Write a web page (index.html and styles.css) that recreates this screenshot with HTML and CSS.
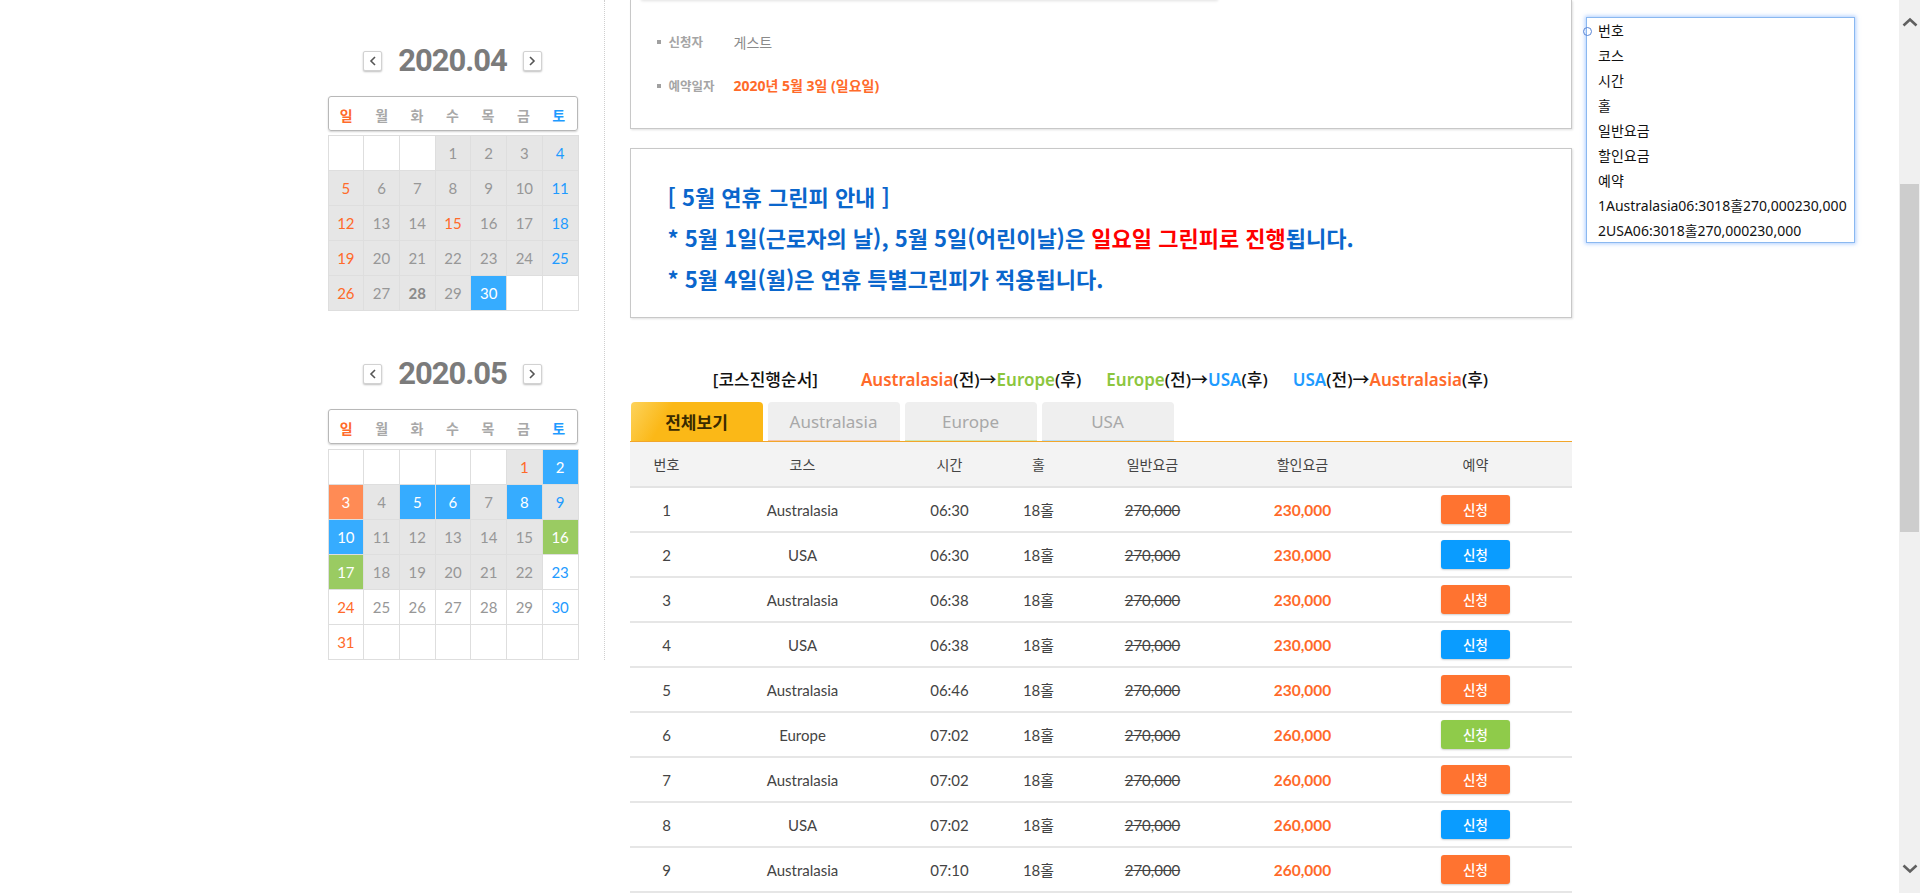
FILE: index.html
```html
<!DOCTYPE html>
<html lang="ko">
<head>
<meta charset="utf-8">
<title>예약</title>
<link rel="stylesheet" href="styles.css">
</head>
<body>
<div class="viewport">
  <div class="wrap">
    <aside class="side">
      <section class="cal">
        <div class="cal-title">
          <span class="arrow"><svg width="8" height="10" viewBox="0 0 8 10"><polyline points="6,1 2,5 6,9" fill="none" stroke="#555" stroke-width="1.6"/></svg></span>
          <h3>2020.04</h3>
          <span class="arrow"><svg width="8" height="10" viewBox="0 0 8 10"><polyline points="2,1 6,5 2,9" fill="none" stroke="#555" stroke-width="1.6"/></svg></span>
        </div>
        <div class="dow"><span class="sun">일</span><span>월</span><span>화</span><span>수</span><span>목</span><span>금</span><span class="sat">토</span></div>
        <table class="grid">
          <tr><td class="w"></td><td class="w"></td><td class="w"></td><td class="g">1</td><td class="g">2</td><td class="g">3</td><td class="g sat">4</td></tr>
          <tr><td class="g sun">5</td><td class="g">6</td><td class="g">7</td><td class="g">8</td><td class="g">9</td><td class="g">10</td><td class="g sat">11</td></tr>
          <tr><td class="g sun">12</td><td class="g">13</td><td class="g">14</td><td class="g sun">15</td><td class="g">16</td><td class="g">17</td><td class="g sat">18</td></tr>
          <tr><td class="g sun">19</td><td class="g">20</td><td class="g">21</td><td class="g">22</td><td class="g">23</td><td class="g">24</td><td class="g sat">25</td></tr>
          <tr><td class="g sun">26</td><td class="g">27</td><td class="g today">28</td><td class="g">29</td><td class="bb">30</td><td class="w"></td><td class="w"></td></tr>
        </table>
      </section>
      <section class="cal cal-next">
        <div class="cal-title">
          <span class="arrow"><svg width="8" height="10" viewBox="0 0 8 10"><polyline points="6,1 2,5 6,9" fill="none" stroke="#555" stroke-width="1.6"/></svg></span>
          <h3>2020.05</h3>
          <span class="arrow"><svg width="8" height="10" viewBox="0 0 8 10"><polyline points="2,1 6,5 2,9" fill="none" stroke="#555" stroke-width="1.6"/></svg></span>
        </div>
        <div class="dow"><span class="sun">일</span><span>월</span><span>화</span><span>수</span><span>목</span><span>금</span><span class="sat">토</span></div>
        <table class="grid grid-may">
          <tr><td class="w"></td><td class="w"></td><td class="w"></td><td class="w"></td><td class="w"></td><td class="g sun">1</td><td class="bb">2</td></tr>
          <tr><td class="ob">3</td><td class="g">4</td><td class="bb">5</td><td class="bb">6</td><td class="g">7</td><td class="bb">8</td><td class="g sat">9</td></tr>
          <tr><td class="bb">10</td><td class="g">11</td><td class="g">12</td><td class="g">13</td><td class="g">14</td><td class="g">15</td><td class="gb">16</td></tr>
          <tr><td class="gb">17</td><td class="g">18</td><td class="g">19</td><td class="g">20</td><td class="g">21</td><td class="g">22</td><td class="w sat">23</td></tr>
          <tr><td class="w sun">24</td><td class="w">25</td><td class="w">26</td><td class="w">27</td><td class="w">28</td><td class="w">29</td><td class="w sat">30</td></tr>
          <tr><td class="w sun">31</td><td class="w"></td><td class="w"></td><td class="w"></td><td class="w"></td><td class="w"></td><td class="w"></td></tr>
        </table>
      </section>
    </aside>

    <main class="main">
      <div class="info">
        <div class="cutcard"></div>
        <div class="info-row"><span class="label">신청자</span><span class="value">게스트</span></div>
        <div class="info-row"><span class="label">예약일자</span><span class="value date">2020년 5월 3일 (일요일)</span></div>
      </div>

      <div class="notice">
        <p>[ 5월 연휴 그린피 안내 ]</p>
        <p>* 5월 1일(근로자의 날), 5월 5일(어린이날)은 <em>일요일 그린피로 진행</em>됩니다.</p>
        <p>* 5월 4일(월)은 연휴 특별그린피가 적용됩니다.</p>
      </div>

      <div class="order">
        <span class="order-title">[코스진행순서]</span>
        <span class="order-item"><b class="c-au">Australasia</b>(전)→<b class="c-eu">Europe</b>(후)</span>
        <span class="order-item"><b class="c-eu">Europe</b>(전)→<b class="c-us">USA</b>(후)</span>
        <span class="order-item"><b class="c-us">USA</b>(전)→<b class="c-au">Australasia</b>(후)</span>
      </div>

      <div class="tabs">
        <span class="tab active">전체보기</span>
        <span class="tab t-au">Australasia</span>
        <span class="tab t-eu">Europe</span>
        <span class="tab t-us">USA</span>
      </div>

      <table class="list">
        <colgroup><col class="c1"><col class="c2"><col class="c3"><col class="c4"><col class="c5"><col class="c6"><col class="c7"></colgroup>
        <thead>
          <tr><th>번호</th><th>코스</th><th>시간</th><th>홀</th><th>일반요금</th><th>할인요금</th><th>예약</th></tr>
        </thead>
        <tbody>
          <tr><td>1</td><td>Australasia</td><td>06:30</td><td>18홀</td><td><s>270,000</s></td><td class="price">230,000</td><td><span class="btn b-au">신청</span></td></tr>
          <tr><td>2</td><td>USA</td><td>06:30</td><td>18홀</td><td><s>270,000</s></td><td class="price">230,000</td><td><span class="btn b-us">신청</span></td></tr>
          <tr><td>3</td><td>Australasia</td><td>06:38</td><td>18홀</td><td><s>270,000</s></td><td class="price">230,000</td><td><span class="btn b-au">신청</span></td></tr>
          <tr><td>4</td><td>USA</td><td>06:38</td><td>18홀</td><td><s>270,000</s></td><td class="price">230,000</td><td><span class="btn b-us">신청</span></td></tr>
          <tr><td>5</td><td>Australasia</td><td>06:46</td><td>18홀</td><td><s>270,000</s></td><td class="price">230,000</td><td><span class="btn b-au">신청</span></td></tr>
          <tr><td>6</td><td>Europe</td><td>07:02</td><td>18홀</td><td><s>270,000</s></td><td class="price">260,000</td><td><span class="btn b-eu">신청</span></td></tr>
          <tr><td>7</td><td>Australasia</td><td>07:02</td><td>18홀</td><td><s>270,000</s></td><td class="price">260,000</td><td><span class="btn b-au">신청</span></td></tr>
          <tr><td>8</td><td>USA</td><td>07:02</td><td>18홀</td><td><s>270,000</s></td><td class="price">260,000</td><td><span class="btn b-us">신청</span></td></tr>
          <tr><td>9</td><td>Australasia</td><td>07:10</td><td>18홀</td><td><s>270,000</s></td><td class="price">260,000</td><td><span class="btn b-au">신청</span></td></tr>
        </tbody>
      </table>
    </main>
  </div>

  <ul class="popup">
    <li>번호</li>
    <li>코스</li>
    <li>시간</li>
    <li>홀</li>
    <li>일반요금</li>
    <li>할인요금</li>
    <li>예약</li>
    <li>1Australasia06:3018홀270,000230,000</li>
    <li>2USA06:3018홀270,000230,000</li>
  </ul>
</div>

<div class="scrollbar">
  <div class="sb-btn"><svg width="16" height="10" viewBox="0 0 16 10"><polyline points="1.5,8.5 8,2.5 14.5,8.5" fill="none" stroke="#606060" stroke-width="2.6"/></svg></div>
  <div class="sb-space-top"></div>
  <div class="sb-thumb"></div>
  <div class="sb-space"></div>
  <div class="sb-btn sb-down"><svg width="16" height="10" viewBox="0 0 16 10"><polyline points="1.5,1.5 8,7.5 14.5,1.5" fill="none" stroke="#606060" stroke-width="2.6"/></svg></div>
</div>
</body>
</html>
```

FILE: styles.css
```css
* { box-sizing: border-box; }

html, body {
  margin: 0;
  padding: 0;
  height: 893px;
  overflow: hidden;
  background: #fff;
}

body {
  display: flex;
  font-family: "Noto Sans", "Noto Sans CJK KR", sans-serif;
  color: #333;
}

.viewport {
  flex: 1;
  position: relative;
  overflow: hidden;
}

.wrap {
  width: 1244px;
  margin: 0 auto;
  display: flex;
  align-items: flex-start;
}

/* ---------- left calendars ---------- */
.side {
  width: 277px;
  padding: 46px 26px 0 0;
  border-right: 1px dotted #cfcfcf;
}

.cal-next { margin-top: 48px; }

.cal-title {
  height: 30px;
  display: flex;
  justify-content: center;
  align-items: center;
  gap: 16px;
}

.cal-title h3 {
  margin: 0;
  font-family: Roboto, "Liberation Sans", sans-serif;
  font-weight: 700;
  font-size: 31px;
  letter-spacing: -1px;
  line-height: 30px;
  color: #7b7b7b;
}

.arrow {
  width: 19px;
  height: 20px;
  border: 1px solid #d2d2d2;
  border-radius: 2px;
  background: #fff;
  box-shadow: 0 1px 2px rgba(0, 0, 0, 0.25);
  display: flex;
  align-items: center;
  justify-content: center;
}

.dow {
  margin-top: 20px;
  width: 250px;
  height: 35px;
  border: 1px solid #b8b8b8;
  border-radius: 3px;
  box-shadow: 0 1px 2px rgba(0, 0, 0, 0.18);
  display: grid;
  grid-template-columns: repeat(7, 1fr);
  align-items: center;
  padding-top: 2px;
  text-align: center;
  font-family: "Noto Sans CJK KR", sans-serif;
  font-weight: 700;
  font-size: 14px;
  color: #a8a8a8;
}

.dow .sun { color: #ff6a2a; }
.dow .sat { color: #1e9bff; }

.grid {
  margin-top: 4px;
  width: 251px;
  border-collapse: collapse;
  table-layout: fixed;
  font-family: Lato, "Noto Sans", sans-serif;
  font-size: 15px;
}

.grid-may { margin-top: 5px; }

.grid td {
  height: 35px;
  padding: 0;
  border: 1px solid #dedede;
  text-align: center;
  color: #979797;
}

.grid td.g { background: #e6e6e6; }
.grid td.w { background: #fff; }
.grid td.sun { color: #ff6a2a; }
.grid td.sat { color: #1e9bff; }
.grid td.today { font-weight: 700; color: #8a8a8a; }
.grid td.bb { background: #36acff; color: #fff; }
.grid td.ob { background: #ff8b55; color: #fff; }
.grid td.gb { background: #9acb62; color: #fff; }

/* ---------- main ---------- */
.main {
  width: 942px;
  margin-left: 25px;
}

.info {
  position: relative;
  border: 1px solid #c8c8c8;
  border-top: none;
  box-shadow: 1px 1px 2px rgba(0, 0, 0, 0.12);
  padding: 32px 26px 32px;
}

.cutcard {
  position: absolute;
  top: -3px;
  left: 10px;
  width: 577px;
  height: 3px;
  box-shadow: 0 1px 3px rgba(0, 0, 0, 0.12);
}

.info-row {
  display: flex;
  align-items: center;
  height: 20px;
  line-height: 20px;
}

.info-row + .info-row { margin-top: 24px; }

.label {
  position: relative;
  width: 77px;
  padding-left: 12px;
  font-family: "Noto Sans CJK KR", sans-serif;
  font-weight: 700;
  font-size: 12.5px;
  color: #a5a5a5;
}

.label::before {
  content: "";
  position: absolute;
  left: 0;
  top: 8px;
  width: 4px;
  height: 4px;
  background: #a0a0a0;
}

.value {
  font-family: "Noto Sans CJK KR", sans-serif;
  font-size: 14px;
  color: #8a8a8a;
}

.value.date {
  font-family: "Noto Sans", "Noto Sans CJK KR", sans-serif;
  font-weight: 700;
  color: #ff6a2a;
}

.notice {
  margin-top: 19px;
  border: 1px solid #c8c8c8;
  box-shadow: 1px 1px 2px rgba(0, 0, 0, 0.12);
  padding: 27px 37px 18px;
}

.notice p {
  margin: 0;
  line-height: 41px;
  font-family: "Noto Sans CJK KR", sans-serif;
  font-weight: 700;
  font-size: 22px;
  color: #0a66cc;
}

.notice em {
  font-style: normal;
  color: #ff0000;
}

.order {
  margin-top: 50px;
  height: 24px;
  line-height: 24px;
  display: flex;
  justify-content: center;
  gap: 25px;
  font-size: 17px;
  font-weight: 500;
  color: #111;
}

.order-title { margin-right: 18px; }

.order b { font-weight: 600; }
.c-au { color: #ff6a2a; }
.c-eu { color: #8cc63e; }
.c-us { color: #1e9bff; }

.tabs {
  margin-top: 10px;
  display: flex;
  gap: 5px;
  padding-left: 1px;
  border-bottom: 1px solid #f2a62a;
}

.tab {
  width: 132px;
  height: 39px;
  line-height: 39px;
  text-align: center;
  border-radius: 4px 4px 0 0;
  background: #efefef;
  font-size: 17px;
  color: #a8a8a8;
}

.tab.active {
  background: linear-gradient(120deg, #fdd35c 0%, #fbb817 28%, #fbb817 100%);
  color: #3a2a00;
  font-family: "Noto Sans CJK KR", sans-serif;
  font-weight: 700;
  font-size: 17px;
}

.tab.t-au { border-bottom: 1px solid #f7c3a8; }
.tab.t-eu { border-bottom: 1px solid #cfe6b0; }
.tab.t-us { border-bottom: 1px solid #b7dcf5; }

.list {
  width: 942px;
  border-collapse: collapse;
  table-layout: fixed;
  font-family: Lato, "Noto Sans CJK KR", sans-serif;
  font-size: 15px;
  color: #444;
  text-align: center;
}

.list col.c1 { width: 74px; }
.list col.c2 { width: 198px; }
.list col.c3 { width: 96px; }
.list col.c4 { width: 82px; }
.list col.c5 { width: 146px; }
.list col.c6 { width: 154px; }
.list col.c7 { width: 192px; }

.list th {
  height: 45px;
  padding: 0;
  background: #f3f3f3;
  border-bottom: 2px solid #e3e3e3;
  font-family: "Noto Sans CJK KR", sans-serif;
  font-weight: 400;
  font-size: 14px;
  color: #444;
}

.list td {
  height: 45px;
  padding: 0;
  border-bottom: 2px solid #e6e6e6;
}

.list s { color: #444; }

.list td.price {
  font-weight: 700;
  font-size: 15.5px;
  color: #ff6a2a;
}

.btn {
  display: inline-block;
  width: 69px;
  height: 29px;
  line-height: 29px;
  border-radius: 3px;
  box-shadow: 0 1px 2px rgba(0, 0, 0, 0.2);
  font-family: "Noto Sans CJK KR", sans-serif;
  font-weight: 500;
  font-size: 13.5px;
  color: #fff;
  vertical-align: middle;
}

.b-au { background: #ff7330; }
.b-us { background: #0a9cff; }
.b-eu { background: #8fcb4a; }

/* ---------- popup list (overlay) ---------- */
.popup {
  position: absolute;
  left: 1586px;
  top: 17px;
  width: 269px;
  height: 226px;
  margin: 0;
  padding: 0 0 0 11px;
  list-style: none;
  background: #fff;
  border: 1px solid #8ab8f0;
  box-shadow: 0 0 4px 1px rgba(110, 165, 255, 0.55);
  font-family: "Noto Sans", "Noto Sans CJK KR", sans-serif;
  font-size: 14px;
  line-height: 25px;
  color: #111;
}

.popup::before {
  content: "";
  position: absolute;
  left: -4px;
  top: 9px;
  width: 7px;
  height: 7px;
  border: 1px solid #5a86d6;
  border-radius: 50%;
}

/* ---------- fake window scrollbar ---------- */
.scrollbar {
  width: 21px;
  flex: none;
  background: #f0f0f0;
  display: flex;
  flex-direction: column;
  align-items: center;
}

.sb-btn {
  height: 43px;
  display: flex;
  align-items: center;
  justify-content: center;
}

.sb-space-top { height: 141px; }

.sb-thumb {
  width: 19px;
  height: 348px;
  background: #cdcdcd;
}

.sb-space { flex: 1; }

.sb-down { height: 48px; }
```
